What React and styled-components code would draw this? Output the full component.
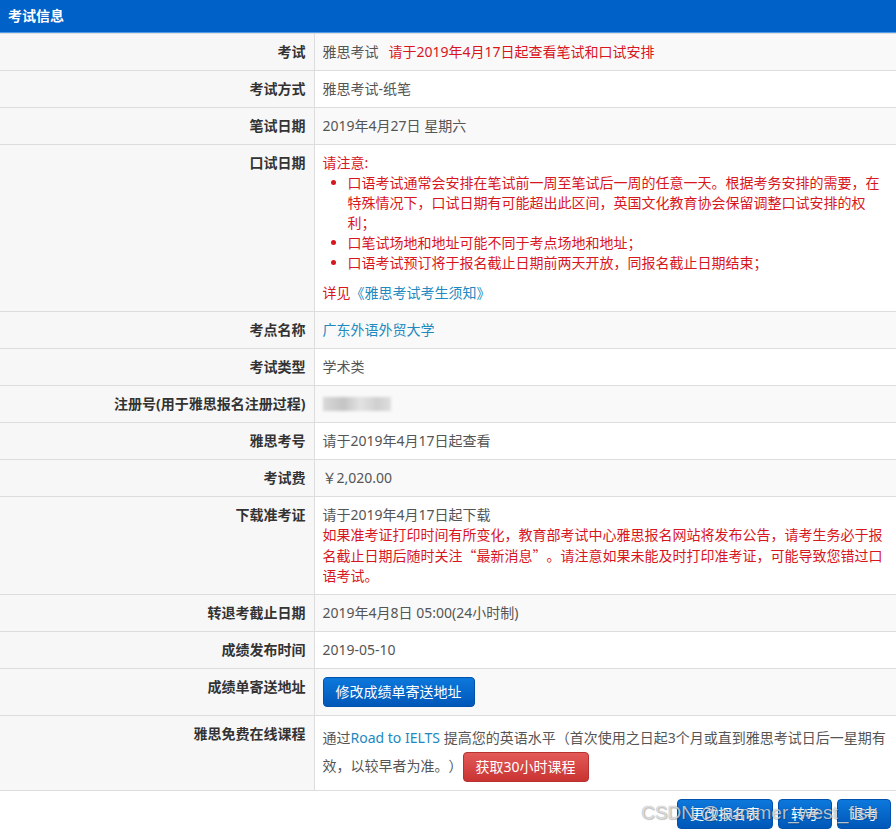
import styled, { createGlobalStyle } from 'styled-components';

const GlobalStyle = createGlobalStyle`
  * {
    box-sizing: border-box;
  }

  body {
    margin: 0;
    background: #ffffff;
    color: #555555;
    font-family: 'Noto Sans', 'Noto Sans CJK SC', sans-serif;
    font-size: 14px;
    line-height: 20px;
    text-spacing-trim: space-all;
  }
`;

const Page = styled.div`
  position: relative;
  width: 896px;
  min-height: 835px;
`;

const PanelHeading = styled.div`
  display: flex;
  align-items: center;
  height: 33px;
  padding: 0 8px;
  background: #0061c8;
  border-bottom: 1px solid #4f9be6;
  color: #ffffff;
  font-weight: 700;
`;

const InfoTable = styled.table`
  width: 100%;
  table-layout: fixed;
  border-collapse: collapse;
  border-bottom: 1px solid #dddddd;

  tr:nth-child(odd) td {
    background: #f9f9f9;
  }
`;

const Label = styled.th`
  width: 314px;
  padding: 8px;
  border-top: 1px solid #dddddd;
  border-right: 1px solid #dddddd;
  background: #f7f7f7;
  color: #333333;
  font-weight: 700;
  text-align: right;
  vertical-align: top;
`;

const Value = styled.td`
  padding: 8px;
  border-top: 1px solid #dddddd;
  background: #ffffff;
  vertical-align: top;
  line-height: ${({ $tall }) => ($tall ? '28px' : '20px')};
`;

const Red = styled.span`
  color: #d8161e;
  margin-left: ${({ $gap }) => ($gap ? '10px' : '0')};
`;

const RedBlock = styled.div`
  color: #d8161e;
`;

const Quote = styled.span`
  font-family: 'Noto Sans CJK SC', sans-serif;
`;

const Link = styled.a`
  color: #2189c0;
  text-decoration: none;
`;

const NoticeList = styled.ul`
  margin: 0 0 10px;
  padding-left: 25px;
  color: #d8161e;
`;

const Blurred = styled.span`
  display: inline-block;
  width: 68px;
  height: 14px;
  margin-top: 3px;
  vertical-align: top;
  background: linear-gradient(90deg, #d8d8d8 0%, #c4c4c4 30%, #e2e2e2 55%, #cfcfcf 80%, #dedede 100%);
  filter: blur(1.5px);
`;

const Button = styled.button`
  display: inline-block;
  padding: 5px 12px;
  border: 1px solid ${({ $variant }) => ($variant === 'danger' ? '#b83232' : '#0052ad')};
  border-radius: 4px;
  background: ${({ $variant }) =>
    $variant === 'danger'
      ? 'linear-gradient(180deg, #e25a58 0%, #c93432 100%)'
      : 'linear-gradient(180deg, #0d78dc 0%, #0057b8 100%)'};
  color: #ffffff;
  font-family: inherit;
  font-size: 14px;
  line-height: 18px;
  vertical-align: middle;
  cursor: pointer;
`;

const Toolbar = styled.div`
  display: flex;
  justify-content: flex-end;
  gap: 5px;
  padding: 8px 5px 0;
`;

const Watermark = styled.div`
  position: absolute;
  right: 18px;
  bottom: 10px;
  font-family: 'Liberation Sans', Arial, sans-serif;
  font-size: 19px;
  line-height: 24px;
  color: rgba(255, 255, 255, 0.7);
  text-shadow: 0 0 1px rgba(0, 0, 0, 0.45), 1px 1px 1px rgba(0, 0, 0, 0.2);
  pointer-events: none;
`;

function Row({ label, children, tall }) {
  return (
    <tr>
      <Label>{label}</Label>
      <Value $tall={tall}>{children}</Value>
    </tr>
  );
}

export default function App() {
  return (
    <Page>
      <GlobalStyle />
      <PanelHeading>考试信息</PanelHeading>
      <InfoTable>
        <tbody>
          <Row label="考试">
            雅思考试<Red $gap>请于2019年4月17日起查看笔试和口试安排</Red>
          </Row>
          <Row label="考试方式">雅思考试-纸笔</Row>
          <Row label="笔试日期">2019年4月27日 星期六</Row>
          <Row label="口试日期">
            <RedBlock>请注意:</RedBlock>
            <NoticeList>
              <li>
                口语考试通常会安排在笔试前一周至笔试后一周的任意一天。根据考务安排的需要，在特殊情况下，口试日期有可能超出此区间，英国文化教育协会保留调整口试安排的权利；
              </li>
              <li>口笔试场地和地址可能不同于考点场地和地址；</li>
              <li>口语考试预订将于报名截止日期前两天开放，同报名截止日期结束；</li>
            </NoticeList>
            <Red>
              详见<Link href="#">《雅思考试考生须知》</Link>
            </Red>
          </Row>
          <Row label="考点名称">
            <Link href="#">广东外语外贸大学</Link>
          </Row>
          <Row label="考试类型">学术类</Row>
          <Row label="注册号(用于雅思报名注册过程)">
            <Blurred />
          </Row>
          <Row label="雅思考号">请于2019年4月17日起查看</Row>
          <Row label="考试费">￥2,020.00</Row>
          <Row label="下载准考证">
            <div>请于2019年4月17日起下载</div>
            <RedBlock>
              如果准考证打印时间有所变化，教育部考试中心雅思报名网站将发布公告，请考生务必于报名截止日期后随时关注
              <Quote>“最新消息”</Quote>
              。请注意如果未能及时打印准考证，可能导致您错过口语考试。
            </RedBlock>
          </Row>
          <Row label="转退考截止日期">2019年4月8日 05:00(24小时制)</Row>
          <Row label="成绩发布时间">2019-05-10</Row>
          <Row label="成绩单寄送地址">
            <Button>修改成绩单寄送地址</Button>
          </Row>
          <Row label="雅思免费在线课程" tall>
            通过<Link href="#">Road to IELTS</Link> 提高您的英语水平（首次使用之日起3个月或直到雅思考试日后一星期有效，以较早者为准。）
            <Button $variant="danger">获取30小时课程</Button>
          </Row>
        </tbody>
      </InfoTable>
      <Toolbar>
        <Button>更改报名表</Button>
        <Button>转考</Button>
        <Button>退考</Button>
      </Toolbar>
      <Watermark>CSDN @summer_west_fish</Watermark>
    </Page>
  );
}
